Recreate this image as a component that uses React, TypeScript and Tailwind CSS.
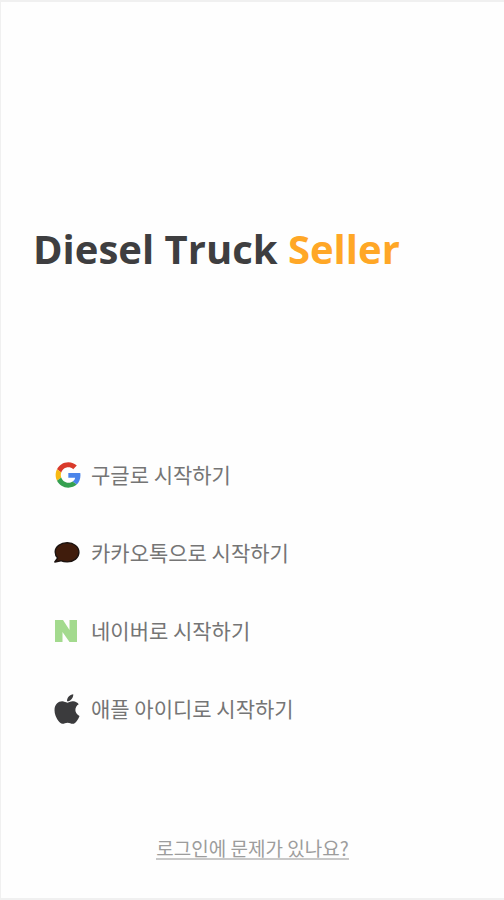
import type { ReactNode } from "react";

function GoogleIcon() {
  return (
    <svg viewBox="-5 -2 53 52" className="h-7 w-7" aria-hidden="true">
      <path
        fill="#d93a2b"
        d="M24 9.5c3.54 0 6.71 1.22 9.21 3.6l6.85-6.85C35.9 2.38 30.47 0 24 0 14.62 0 6.51 5.38 2.56 13.22l7.98 6.19C12.43 13.72 17.74 9.5 24 9.5z"
      />
      <path
        fill="#4a84ea"
        d="M46.98 24.55c0-1.57-.15-3.09-.38-4.55H24v9.02h12.94c-.58 2.96-2.26 5.48-4.78 7.18l7.73 6c4.51-4.18 7.09-10.36 7.09-17.65z"
      />
      <path
        fill="#f8b912"
        d="M10.53 28.59c-.48-1.45-.76-2.99-.76-4.59s.27-3.14.76-4.59l-7.98-6.19C.92 16.46 0 20.12 0 24c0 3.88.92 7.54 2.56 10.78l7.97-6.19z"
      />
      <path
        fill="#35a050"
        d="M24 48c6.48 0 11.93-2.13 15.89-5.81l-7.73-6c-2.15 1.45-4.92 2.3-8.16 2.3-6.26 0-11.57-4.22-13.47-9.91l-7.98 6.19C6.51 42.62 14.62 48 24 48z"
      />
    </svg>
  );
}

function KakaoIcon() {
  return (
    <svg viewBox="0 0 28 24" className="h-6 w-7" aria-hidden="true">
      <path
        fill="#401c0c"
        stroke="#1c1310"
        strokeWidth="1.4"
        strokeLinejoin="round"
        d="M14.2 1.8C7.8 1.8 2.2 5.600 2.200 11c0 2.400.9 4.400 2.500 6L1.800 21l6-1.300c1.900.8 4.100 1.200 6.400 1.200 6.500 0 11.700-4.200 11.700-9.700S20.700 1.800 14.200 1.800z"
      />
    </svg>
  );
}

function NaverIcon() {
  return (
    <svg viewBox="0 0 24 22" className="h-[22px] w-6" aria-hidden="true">
      <path fill="#a3da8e" d="M0 0h8l6.500 10V0H22v22h-7.500L7.500 12v10H0z" />
    </svg>
  );
}

function AppleIcon() {
  return (
    <svg viewBox="0 30 384 452" className="h-[30px] w-[26px]" aria-hidden="true">
      <path
        fill="#3b3b3d"
        d="M318.7 268.7c-.2-36.7 16.400-64.400 50-84.800-18.800-26.900-47.200-41.700-84.700-44.600-35.500-2.800-74.300 20.700-88.500 20.700-15 0-49.400-19.700-76.400-19.700C63.300 141.200 4 184.800 4 273.500q0 39.300 14.400 81.200c12.800 36.700 59 126.700 107.200 125.200 25.200-.6 43-17.900 75.800-17.900 31.800 0 48.300 17.900 76.400 17.900 48.600-.7 90.400-82.500 102.600-119.300-65.200-30.700-61.700-90-61.700-91.900zm-56.600-164.200c27.300-32.400 24.800-61.900 24-72.500-24.100 1.400-52 16.400-67.900 34.900-17.500 19.800-27.800 44.300-25.600 71.900 26.100 2 49.900-11.400 69.500-34.300z"
      />
    </svg>
  );
}

const LOGIN_OPTIONS: { id: string; label: string; icon: ReactNode }[] = [
  { id: "google", label: "구글로 시작하기", icon: <GoogleIcon /> },
  { id: "kakao", label: "카카오톡으로 시작하기", icon: <KakaoIcon /> },
  { id: "naver", label: "네이버로 시작하기", icon: <NaverIcon /> },
  { id: "apple", label: "애플 아이디로 시작하기", icon: <AppleIcon /> },
];

export default function App() {
  return (
    <main className="flex min-h-screen flex-col border-y-2 border-l border-[#f0f0f0] bg-[#fefefe] font-['Noto_Sans_CJK_KR',sans-serif]">
      <h1 className="px-8 pt-[219px] font-['Open_Sans',sans-serif] text-[40px] leading-14 font-bold text-[#3e3e40]">
        Diesel Truck <span className="text-[#ffa726]">Seller</span>
      </h1>

      <div className="mt-[179px] flex flex-col items-start gap-10 px-13">
        {LOGIN_OPTIONS.map((option) => (
          <button
            key={option.id}
            type="button"
            className="flex h-[38px] cursor-pointer items-center gap-2.5 text-[21px] text-[#757575]"
          >
            <span className="flex w-7 justify-center">{option.icon}</span>
            {option.label}
          </button>
        ))}
      </div>

      <footer className="mt-auto flex justify-center pb-9.5">
        <a href="#help" className="border-b-2 border-[#c8c8c8] text-[19px] leading-5 text-[#9c9c9c]">
          로그인에 문제가 있나요?
        </a>
      </footer>
    </main>
  );
}
